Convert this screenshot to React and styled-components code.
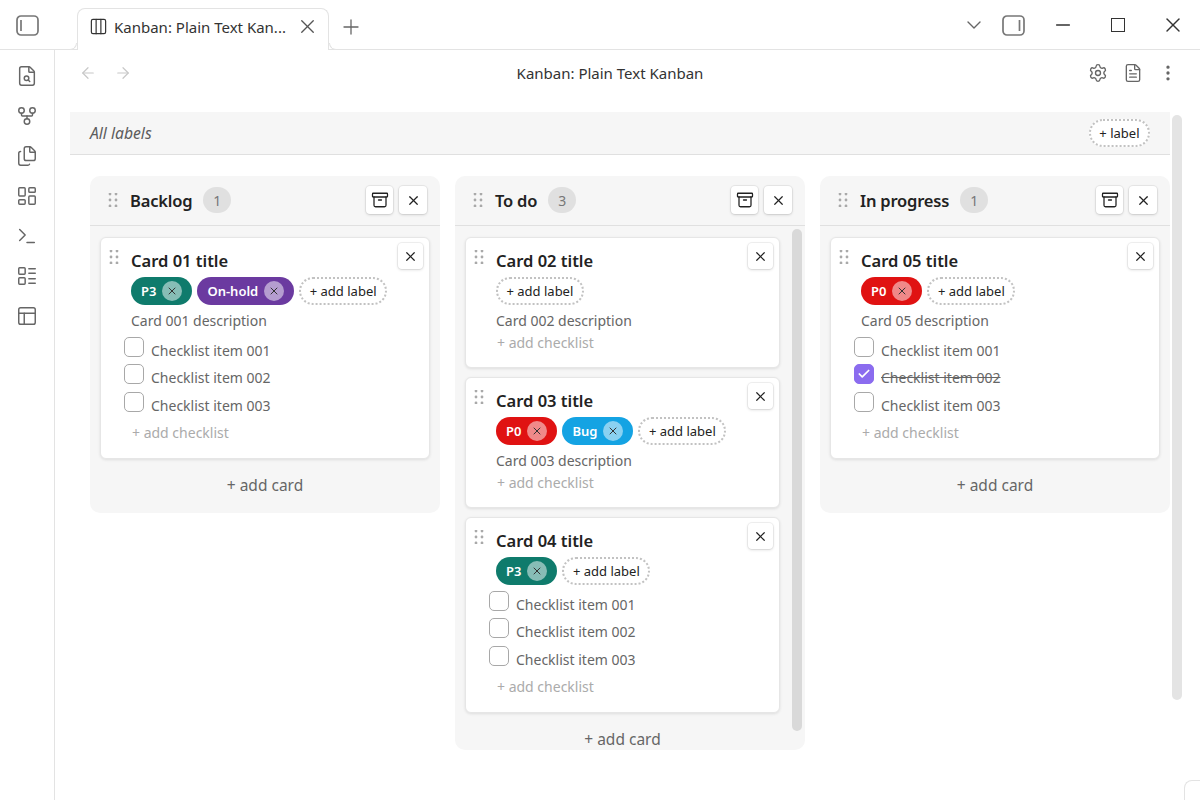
import React from "react";
import styled, { createGlobalStyle } from "styled-components";
import {
  Archive,
  ArrowLeft,
  ArrowRight,
  ChevronDown,
  Columns3,
  EllipsisVertical,
  FileSearch,
  FileText,
  Files,
  GitFork,
  LayoutDashboard,
  LayoutList,
  Minus,
  PanelsTopLeft,
  Plus,
  Settings,
  Terminal,
  X,
  Check,
} from "lucide-react";

const GlobalStyle = createGlobalStyle`
  html, body {
    margin: 0;
    padding: 0;
    background: #fff;
    overflow: hidden;
  }
  body {
    font-family: "Noto Sans", "Open Sans", sans-serif;
    color: #222;
  }
`;

const Page = styled.div`
  position: relative;
  width: 1200px;
  height: 800px;
  display: flex;
  flex-direction: column;
  overflow: hidden;
`;

const TitleBar = styled.div`
  height: 49px;
  flex: none;
  display: flex;
  align-items: flex-end;
  border-bottom: 1px solid #e3e3e3;
  padding-left: 16px;
`;

const SideToggle = styled.svg`
  width: 23px;
  height: 21px;
  flex: none;
  fill: none;
  stroke: #777;
  stroke-width: 1.7;
  margin-bottom: ${(p) => p.$mb || 0}px;
`;

const Tab = styled.div`
  position: relative;
  width: 252px;
  height: 42px;
  margin-left: 38px;
  margin-bottom: -1px;
  box-sizing: border-box;
  flex: none;
  display: flex;
  align-items: center;
  background: #fff;
  border: 1px solid #e3e3e3;
  border-bottom: none;
  border-radius: 8px 8px 0 0;
  padding: 0 9px 6px 11px;
  font-size: 15px;
  color: #333;

  &::before,
  &::after {
    content: "";
    position: absolute;
    bottom: 0;
    width: 7px;
    height: 7px;
    box-sizing: border-box;
    background: #fff;
    border-bottom: 1px solid #e3e3e3;
  }
  &::before {
    left: -8px;
    border-right: 1px solid #e3e3e3;
    border-bottom-right-radius: 7px;
  }
  &::after {
    right: -8px;
    border-left: 1px solid #e3e3e3;
    border-bottom-left-radius: 7px;
  }
`;

const TabLabel = styled.span`
  flex: 1;
  margin-left: 6px;
  white-space: nowrap;
`;

const NewTab = styled.div`
  display: flex;
  margin: 0 0 10px 10px;
  color: #666;
`;

const WindowControls = styled.div`
  margin-left: auto;
  display: flex;
  align-items: center;
  height: 48px;
`;

const Control = styled.div`
  display: flex;
  justify-content: center;
  width: ${(p) => p.$w}px;
  color: ${(p) => p.$color || "#333"};
`;

const MaxBox = styled.span`
  width: 12px;
  height: 12px;
  border: 1.5px solid #333;
`;

const Body = styled.div`
  flex: 1;
  display: flex;
  min-height: 0;
`;

const Ribbon = styled.div`
  width: 54px;
  flex: none;
  border-right: 1px solid #e3e3e3;
  display: flex;
  flex-direction: column;
  align-items: center;
  gap: 18px;
  padding-top: 15px;
  color: #666;
`;

const Main = styled.div`
  flex: 1;
  min-width: 0;
  display: flex;
  flex-direction: column;
`;

const ViewHeader = styled.div`
  height: 46px;
  flex: none;
  display: flex;
  align-items: center;
  padding: 0 22px 0 24px;
`;

const NavGroup = styled.div`
  display: flex;
  gap: 17px;
  color: #c8c8c8;
`;

const ViewTitle = styled.div`
  flex: 1;
  text-align: center;
  font-size: 15px;
  color: #333;
`;

const ActionGroup = styled.div`
  display: flex;
  gap: 15px;
  color: #666;
`;

const LabelBar = styled.div`
  margin: 16px 30px 0 15px;
  height: 42px;
  flex: none;
  display: flex;
  align-items: center;
  justify-content: space-between;
  background: #f6f6f6;
  border-bottom: 1px solid #e0e0e0;
  padding: 0 20px;
`;

const AllLabels = styled.span`
  font-size: 15.7px;
  font-style: italic;
  color: #5c5c5c;
`;

const DashedPill = styled.div`
  height: 28px;
  box-sizing: border-box;
  display: inline-flex;
  align-items: center;
  padding: 0 8.5px;
  background: #fff;
  border: 2px dotted #c2c2c2;
  border-radius: 14px;
  font-size: 13px;
  color: #222;
  white-space: nowrap;
`;

const Board = styled.div`
  display: flex;
  align-items: flex-start;
  gap: 15px;
  padding: 21px 0 0 35px;
`;

const LaneBox = styled.div`
  position: relative;
  width: 350px;
  max-height: 574px;
  overflow: hidden;
  flex: none;
  background: #f6f6f6;
  border-radius: 10px;
`;

const LaneHeader = styled.div`
  height: 48px;
  display: flex;
  align-items: center;
  padding: 0 13px 1px 18px;
  border-bottom: 1px solid #e0e0e0;
`;

const LaneTitle = styled.span`
  margin-left: 12px;
  font-size: 16.5px;
  letter-spacing: -0.2px;
  font-weight: 600;
  color: #222;
`;

const Count = styled.span`
  margin-left: 11px;
  width: 28px;
  height: 26px;
  border-radius: 13px;
  background: #e0e0e0;
  color: #777;
  font-size: 14px;
  display: flex;
  align-items: center;
  justify-content: center;
`;

const IconButton = styled.button`
  width: ${(p) => p.$w || 28}px;
  height: ${(p) => p.$h || 28}px;
  margin-left: ${(p) => p.$ml || "0"};
  padding: 0;
  display: flex;
  align-items: center;
  justify-content: center;
  background: #fff;
  border: none;
  border-radius: 4px;
  box-shadow: 0 0 0 1px rgba(0, 0, 0, 0.05), 0 1px 3px rgba(0, 0, 0, 0.14);
  color: #222;
`;

const CardList = styled.div`
  display: flex;
  flex-direction: column;
  gap: 9.2px;
  padding: 11px ${(p) => (p.$scroll ? 25 : 10)}px 0 10px;
`;

const CardBox = styled.div`
  position: relative;
  box-sizing: border-box;
  background: #fff;
  border: 1px solid #e6e6e6;
  border-radius: 6px;
  box-shadow: 0 1px 3px rgba(0, 0, 0, 0.1);
  padding: 11px 9px 14px 30px;
`;

const CardGrip = styled.div`
  position: absolute;
  top: 12px;
  left: 8px;
  display: flex;
`;

const CardClose = styled.div`
  position: absolute;
  top: 5px;
  right: 6px;
`;

const CardTitle = styled.div`
  height: 24px;
  line-height: 24px;
  font-size: 16.5px;
  font-weight: 600;
  color: #222;
`;

const TagRow = styled.div`
  display: flex;
  gap: 5px;
  margin-top: 4px;
`;

const Tag = styled.div`
  height: 28px;
  display: inline-flex;
  align-items: center;
  padding: 0 10px;
  border-radius: 14px;
  background: ${(p) => p.$color};
  color: #fff;
  font-size: 13px;
  font-weight: 600;
`;

const TagClose = styled.span`
  width: 20px;
  height: 20px;
  margin-left: 6px;
  border-radius: 50%;
  background: rgba(255, 255, 255, 0.5);
  color: #333;
  display: flex;
  align-items: center;
  justify-content: center;
`;

const Description = styled.div`
  margin-top: 6px;
  height: 20px;
  line-height: 20px;
  font-size: 14px;
  color: #666;
`;

const Checklist = styled.div`
  margin: 5.5px 0 2.5px -7px;
`;

const CheckRow = styled.div`
  height: 27.5px;
  display: flex;
  align-items: flex-start;
  font-size: 14px;
  color: #666;
  text-decoration: ${(p) => (p.$done ? "line-through" : "none")};
`;

const CheckBox = styled.span`
  width: 20px;
  height: 20px;
  flex: none;
  box-sizing: border-box;
  border-radius: 5px;
  border: 1px solid ${(p) => (p.$done ? "#8b6cef" : "#a8a8a8")};
  background: ${(p) => (p.$done ? "#8b6cef" : "#fff")};
  color: #fff;
  display: flex;
  align-items: center;
  justify-content: center;
`;

const CheckText = styled.span`
  margin: 4px 0 0 7px;
  line-height: 20px;
`;

const AddChecklist = styled.div`
  height: 22px;
  line-height: 22px;
  margin-left: 1px;
  font-size: 14px;
  color: #ababab;

  ${Description} + & {
    position: relative;
    top: 1px;
  }
`;

const AddCard = styled.div`
  height: 52px;
  padding-bottom: 2px;
  display: flex;
  align-items: center;
  justify-content: center;
  font-size: 15.5px;
  color: #666;
  padding-right: ${(p) => (p.$scroll ? 15 : 0)}px;
`;

const LaneScrollbar = styled.div`
  position: absolute;
  top: 53px;
  right: 3px;
  width: 10px;
  height: 502px;
  border-radius: 5px;
  background: #d9d9d9;
`;

const PageScrollbar = styled.div`
  position: absolute;
  top: 115px;
  left: 1172px;
  width: 10px;
  height: 585px;
  border-radius: 5px;
  background: #e4e4e4;
`;

const StatusCorner = styled.div`
  position: absolute;
  right: 0;
  bottom: 0;
  width: 15px;
  height: 19px;
  border-top: 1px solid #e3e3e3;
  border-left: 1px solid #e3e3e3;
  border-top-left-radius: 8px;
`;

function Grip() {
  return (
    <svg width="10" height="14" viewBox="0 0 10 14" fill="#a9a9a9">
      {[1, 7, 13].map((y) => (
        <React.Fragment key={y}>
          <circle cx="2" cy={y} r="1.4" />
          <circle cx="8" cy={y} r="1.4" />
        </React.Fragment>
      ))}
    </svg>
  );
}

function CardItem({ title, tags = [], description, items = [] }) {
  return (
    <CardBox>
      <CardGrip>
        <Grip />
      </CardGrip>
      <CardClose>
        <IconButton $w={25} $h={26}>
          <X size={15} strokeWidth={1.9} />
        </IconButton>
      </CardClose>
      <CardTitle>{title}</CardTitle>
      <TagRow>
        {tags.map((tag) => (
          <Tag key={tag.name} $color={tag.color}>
            {tag.name}
            <TagClose>
              <X size={12} strokeWidth={2} />
            </TagClose>
          </Tag>
        ))}
        <DashedPill>+ add label</DashedPill>
      </TagRow>
      {description && <Description>{description}</Description>}
      {items.length > 0 && (
        <Checklist>
          {items.map((item) => (
            <CheckRow key={item.text} $done={item.done}>
              <CheckBox $done={item.done}>
                {item.done && <Check size={14} strokeWidth={3} />}
              </CheckBox>
              <CheckText>{item.text}</CheckText>
            </CheckRow>
          ))}
        </Checklist>
      )}
      <AddChecklist>+ add checklist</AddChecklist>
    </CardBox>
  );
}

function Lane({ title, count, scroll, children }) {
  return (
    <LaneBox>
      <LaneHeader>
        <Grip />
        <LaneTitle>{title}</LaneTitle>
        <Count>{count}</Count>
        <IconButton $w={27} $ml="auto">
          <Archive size={18} strokeWidth={1.7} />
        </IconButton>
        <IconButton $ml="6px">
          <X size={15} strokeWidth={1.9} />
        </IconButton>
      </LaneHeader>
      <CardList $scroll={scroll}>{children}</CardList>
      <AddCard $scroll={scroll}>+ add card</AddCard>
      {scroll && <LaneScrollbar />}
    </LaneBox>
  );
}

const P0 = { name: "P0", color: "#e01212" };
const P3 = { name: "P3", color: "#0f7b6c" };
const ON_HOLD = { name: "On-hold", color: "#6b3aa0" };
const BUG = { name: "Bug", color: "#14a3e3" };

const items = (done) =>
  ["001", "002", "003"].map((n) => ({
    text: `Checklist item ${n}`,
    done: n === done,
  }));

const ribbonIcons = [
  FileSearch,
  GitFork,
  Files,
  LayoutDashboard,
  Terminal,
  LayoutList,
  PanelsTopLeft,
];

export default function App() {
  return (
    <>
      <GlobalStyle />
      <Page>
        <TitleBar>
          <SideToggle viewBox="0 0 23 21" $mb={13}>
            <rect x="1" y="1" width="21" height="19" rx="4" />
            <path d="M5 5v11" />
          </SideToggle>
          <Tab>
            <Columns3 size={19} strokeWidth={1.5} />
            <TabLabel>Kanban: Plain Text Kan...</TabLabel>
            <X size={23} strokeWidth={1.4} color="#555" />
          </Tab>
          <NewTab>
            <Plus size={24} strokeWidth={1.3} />
          </NewTab>
          <WindowControls>
            <Control $w={36} $color="#666">
              <ChevronDown size={24} strokeWidth={1.4} />
            </Control>
            <Control $w={43}>
              <SideToggle viewBox="0 0 23 21">
                <rect x="1" y="1" width="21" height="19" rx="4" />
                <path d="M17.5 5v11" />
              </SideToggle>
            </Control>
            <Control $w={55}>
              <Minus size={22} strokeWidth={1.4} />
            </Control>
            <Control $w={55}>
              <MaxBox />
            </Control>
            <Control $w={55}>
              <X size={24} strokeWidth={1.4} />
            </Control>
          </WindowControls>
        </TitleBar>
        <Body>
          <Ribbon>
            {ribbonIcons.map((Icon, i) => (
              <Icon key={i} size={22} strokeWidth={1.6} />
            ))}
          </Ribbon>
          <Main>
            <ViewHeader>
              <NavGroup>
                <ArrowLeft size={18} strokeWidth={1.6} />
                <ArrowRight size={18} strokeWidth={1.6} />
              </NavGroup>
              <ViewTitle>Kanban: Plain Text Kanban</ViewTitle>
              <ActionGroup>
                <Settings size={20} strokeWidth={1.6} />
                <FileText size={20} strokeWidth={1.6} />
                <EllipsisVertical size={20} strokeWidth={2} />
              </ActionGroup>
            </ViewHeader>
            <LabelBar>
              <AllLabels>All labels</AllLabels>
              <DashedPill>+ label</DashedPill>
            </LabelBar>
            <Board>
              <Lane title="Backlog" count={1}>
                <CardItem
                  title="Card 01 title"
                  tags={[P3, ON_HOLD]}
                  description="Card 001 description"
                  items={items()}
                />
              </Lane>
              <Lane title="To do" count={3} scroll>
                <CardItem title="Card 02 title" description="Card 002 description" />
                <CardItem
                  title="Card 03 title"
                  tags={[P0, BUG]}
                  description="Card 003 description"
                />
                <CardItem title="Card 04 title" tags={[P3]} items={items()} />
              </Lane>
              <Lane title="In progress" count={1}>
                <CardItem
                  title="Card 05 title"
                  tags={[P0]}
                  description="Card 05 description"
                  items={items("002")}
                />
              </Lane>
            </Board>
          </Main>
        </Body>
        <PageScrollbar />
        <StatusCorner />
      </Page>
    </>
  );
}
